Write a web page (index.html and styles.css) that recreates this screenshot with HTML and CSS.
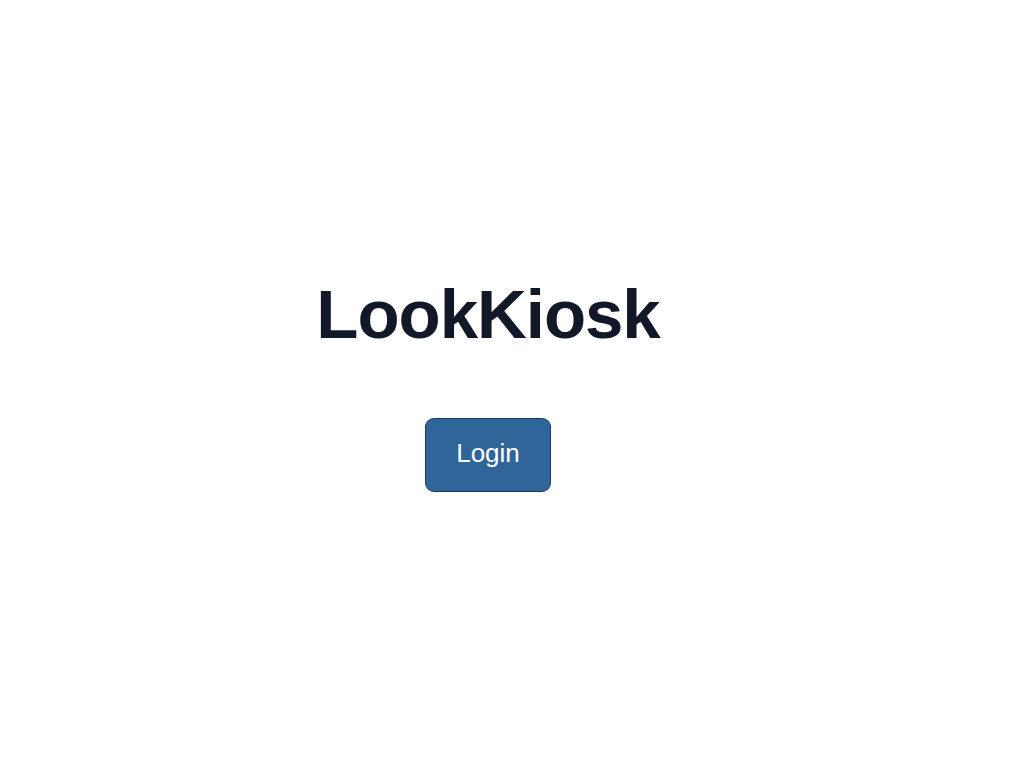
FILE: index.html
```html
<!DOCTYPE html>
<html lang="en">
<head>
<meta charset="utf-8">
<title>LookKiosk</title>
<link rel="stylesheet" href="styles.css">
</head>
<body>
<main class="page">
  <h1 class="title">LookKiosk</h1>
  <button class="login-btn" type="button">Login</button>
</main>
</body>
</html>
```
FILE: styles.css
```css
html, body {
  margin: 0;
  padding: 0;
  background: #ffffff;
}

.page {
  box-sizing: border-box;
  width: 1034px;
  min-height: 768px;
  padding: 280px 58px 0 0;
  display: flex;
  flex-direction: column;
  align-items: center;
  font-family: "Liberation Sans", Arial, Helvetica, sans-serif;
}

.title {
  margin: 0;
  font-size: 69px;
  line-height: 70px;
  font-weight: 700;
  letter-spacing: -0.015em;
  color: #111827;
}

.login-btn {
  margin-top: 68px;
  box-sizing: border-box;
  width: 126px;
  height: 74px;
  padding: 0 0 4px 0;
  display: flex;
  align-items: center;
  justify-content: center;
  font-family: "Liberation Sans", Arial, Helvetica, sans-serif;
  font-size: 26px;
  line-height: 30px;
  color: #ffffff;
  background: #2f6598;
  border: 1px solid #1f3b5e;
  border-radius: 9px;
  cursor: pointer;
}
```
